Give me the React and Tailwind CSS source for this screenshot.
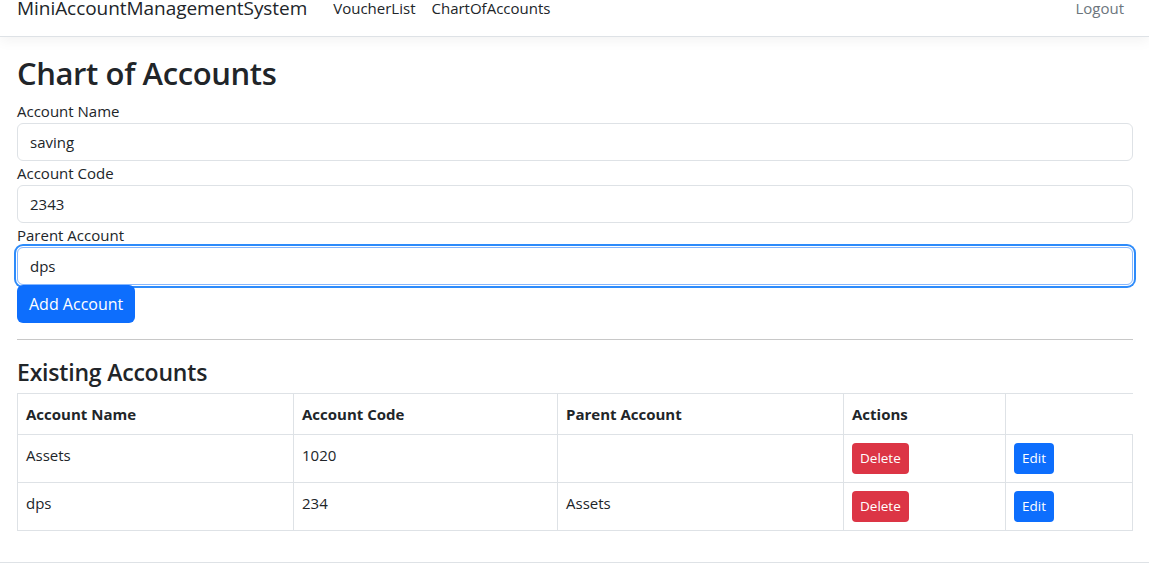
import React from 'react';

/* ── Data ───────────────────────────────────────────────── */

const ACCOUNTS = [
  { name: 'Assets', code: '1020', parent: '' },
  { name: 'dps', code: '234', parent: 'Assets' },
];

const FIELDS = [
  { label: 'Account Name', value: 'saving' },
  { label: 'Account Code', value: '2343' },
  { label: 'Parent Account', value: 'dps', focused: true },
];

const FONT = "font-['Open_Sans','Noto_Sans',sans-serif]";

/* ── Navbar ─────────────────────────────────────────────── */

function Navbar() {
  return (
    <nav className="border-b border-[#dee2e6] bg-white shadow-[0_4px_12px_rgba(0,0,0,0.05)]">
      <div className="-mt-[20px] flex h-[56px] items-center px-[17px]">
        <span className="mr-[18px] text-[19px] tracking-[-0.05px] text-[#212529]">MiniAccountManagementSystem</span>
        <a className="px-2 text-[15px] text-[#212529]">VoucherList</a>
        <a className="px-2 text-[15px] text-[#212529]">ChartOfAccounts</a>
        <a className="ml-auto px-2 text-[15px] text-[#6c757d]">Logout</a>
      </div>
    </nav>
  );
}

/* ── Form ───────────────────────────────────────────────── */

function Field({ label, value, focused }) {
  return (
    <div>
      <label className="block text-[15px] leading-6">{label}</label>
      <input
        readOnly
        value={value}
        className={
          'block h-[38px] w-full rounded-md border bg-white px-3 text-[15px] text-[#212529] outline-none ' +
          (focused
            ? 'border-[#86b7fe] ring-2 ring-[#2d8bfa] ring-offset-1'
            : 'border-[#dee2e6]')
        }
      />
    </div>
  );
}

/* ── Page ───────────────────────────────────────────────── */

export default function App() {
  return (
    <div className={`${FONT} min-h-[573px] bg-white text-[#212529]`}>
      <Navbar />

      <main className="pl-[17px] pr-[16px] pt-[18px]">
        <h2 className="mb-[7px] text-[31px] font-semibold leading-[1.2] tracking-[-0.4px]">Chart of Accounts</h2>

        {FIELDS.map((f) => (
          <Field key={f.label} {...f} />
        ))}
        <button className="relative h-[38px] rounded-md bg-[#0d6efd] px-3 text-[16px] text-white">
          Add Account
        </button>

        <hr className="my-4 border-t border-[#c8c8c8]" />

        <h4 className="mb-[6px] pt-[3px] text-[23px] font-semibold leading-[1.2] tracking-[-0.2px]">Existing Accounts</h4>

        {/* Existing accounts table */}
        <table className="mb-[31px] w-full border-collapse text-[15px]">
          <thead>
            <tr className="border-y border-[#dee2e6] text-left">
              <th className="w-[276px] border-x border-[#dee2e6] px-2 py-2 font-bold leading-6">Account Name</th>
              <th className="w-[264px] border-x border-[#dee2e6] px-2 py-2 font-bold leading-6">Account Code</th>
              <th className="w-[286px] border-x border-[#dee2e6] px-2 py-2 font-bold leading-6">Parent Account</th>
              <th className="w-[162px] border-x border-[#dee2e6] px-2 py-2 font-bold leading-6">Actions</th>
            </tr>
          </thead>
          <tbody>
            {ACCOUNTS.map((a) => (
              <tr key={a.name} className="border-y border-[#dee2e6]">
                <td className="border-x border-[#dee2e6] p-2 align-top leading-6">{a.name}</td>
                <td className="border-x border-[#dee2e6] p-2 align-top leading-6">{a.code}</td>
                <td className="border-x border-[#dee2e6] p-2 align-top leading-6">{a.parent}</td>
                <td className="border-x border-[#dee2e6] p-2 align-top leading-6">
                  <button className="h-[31px] rounded bg-[#dc3545] px-2 text-[13.5px] text-white">Delete</button>
                </td>
                <td className="border-x border-[#dee2e6] p-2 align-top leading-6">
                  <button className="h-[31px] rounded bg-[#0d6efd] px-2 text-[13.5px] text-white">Edit</button>
                </td>
              </tr>
            ))}
          </tbody>
        </table>
      </main>

      <footer className="h-[12px] border-t border-[#dee2e6]" />
    </div>
  );
}
